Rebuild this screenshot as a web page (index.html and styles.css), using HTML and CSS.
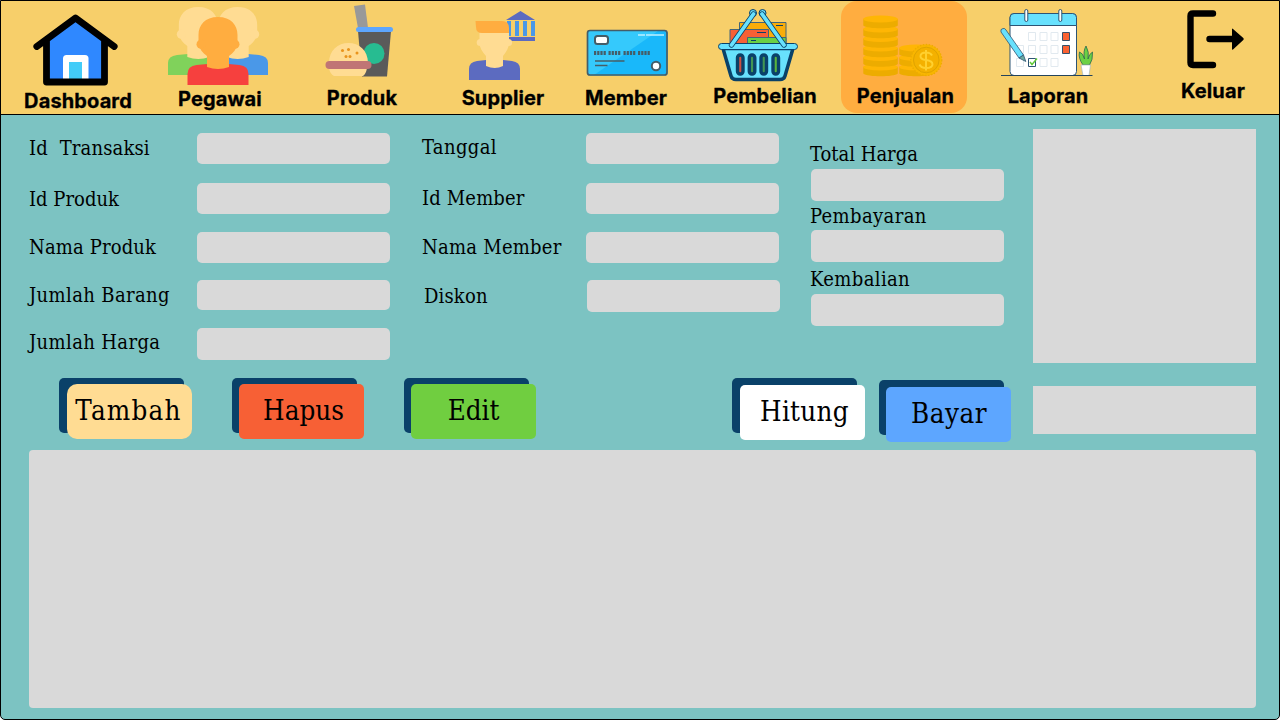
FILE: index.html
```html
<!DOCTYPE html>
<html lang="id">
<head>
<meta charset="utf-8">
<title>Penjualan</title>
<link rel="stylesheet" href="styles.css">
</head>
<body>
<div class="app">
<nav class="nav">
  <a class="nav-item dashboard"><svg width="120" height="88" viewBox="18 1 120 88">
    <path d="M46 40L75.500 20L105 40V82H46z" fill="#2f88ff"/>
    <path d="M63 80V58.500q0-3.500 3.500-3.500h18.500q3.500 0 3.500 3.500V80z" fill="#fff"/><path d="M69 62h13v18H69z" fill="#43ccf8"/>
    <path d="M46.500 40V82H104.500V40M36.800 46.500L75.500 18L114.200 46.500" fill="none" stroke="#000" stroke-width="6.800" stroke-linecap="round" stroke-linejoin="round"/>
  </svg><span>Dashboard</span></a>
  <a class="nav-item pegawai"><svg width="120" height="86" viewBox="160 1 120 86">
    <defs><g id="head"><path d="M218 17c-13 0-19.500 8-19.500 18v9c1 5 4 9 8.500 12v11q11 4 22 0V56c4.500-3 7.500-7 8.500-12v-9c0-10-6.500-18-19.500-18z"/><circle cx="201" cy="44.300" r="4.500"/><circle cx="235" cy="44.300" r="4.500"/></g></defs>
    <path d="M168 75V63q0-7 9-8l11-1h20v21z" fill="#80d25b"/><path d="M268 75V63q0-7-9-8l-11-1h-20v21z" fill="#4a98e8"/>
    <use href="#head" x="-19.700" y="-10" fill="#ffdc93"/><use href="#head" x="19.700" y="-10" fill="#ffdc93"/>
    <path d="M187.500 85V74q0-8 9-9l11-1h21l11 1q9 1 9 9v11z" fill="#f6403e"/>
    <use href="#head" fill="#ffad40"/>
  </svg><span>Pegawai</span></a>
  <a class="nav-item produk"><svg width="120" height="85" viewBox="302 1 120 85">
    <path d="M354 6l11-1.500L368 28h-10z" fill="#999"/><path d="M358 31h33l-4 45.500h-25z" fill="#5a5a5a"/><rect x="356" y="27" width="37" height="5" rx="2.500" fill="#5da6ff"/>
    <circle cx="374" cy="53.500" r="10.500" fill="#27bc91"/><path d="M329 63c0-13 9-20 19.500-20S368 50 368 63zM329 68h38q-1 6-4 8h-29q-4-2-5-8z" fill="#ffdc93"/>
    <rect x="325.500" y="61" width="46" height="8" rx="4" fill="#c07575"/><g fill="#e9941c"><circle cx="342.500" cy="50.500" r="1.500"/><circle cx="348.500" cy="49.500" r="1.500"/><circle cx="357" cy="53" r="1.500"/><circle cx="346" cy="56.500" r="1.500"/><circle cx="350" cy="56.500" r="1.500"/></g>
  </svg><span>Produk</span></a>
  <a class="nav-item supplier"><svg width="120" height="85" viewBox="443 1 120 85">
    <path d="M506 20l14.500-9L535 20zM508 37h27v4h-27z" fill="#5c6bc0"/><path d="M507 21h4v15h-4zM515 21h4v15h-4zM523 21h4v15h-4zM531 21h4v15h-4z" fill="#4a98e8"/>
    <path d="M469 80V69q0-7 8-8l9-1h17l9 1q8 1 8 8v11z" fill="#5c6bc0"/>
    <path d="M479.500 31h29.500v12c0 4-2.500 9-6 13v10q-8 4-17 0V56c-4-4-6.500-9-6.500-13z" fill="#ffdc93"/><circle cx="480.300" cy="42.500" r="3.600" fill="#ffdc93"/><circle cx="508.500" cy="42.500" r="3.600" fill="#ffdc93"/>
    <path d="M475.500 21H502q7 0 7 7v5H482q-6 0-6-6z" fill="#ffad40"/>
  </svg><span>Supplier</span></a>
  <a class="nav-item member"><svg width="120" height="85" viewBox="566 1 120 85">
    <rect x="587.500" y="30.500" width="80" height="45" rx="2" fill="#19b8fa"/><path d="M588 31h70L594 75h-6z" fill="#35c9fc"/>
    <rect x="587.500" y="30.500" width="79.500" height="44.500" rx="2.500" fill="none" stroke="#455d68" stroke-width="1.700"/>
    <rect x="595" y="36" width="13" height="8" rx="2.500" fill="#fff" stroke="#455d68" stroke-width="2"/><circle cx="656" cy="66" r="4.200" fill="#fff" stroke="#455d68" stroke-width="2"/>
    <path d="M594 53h12M608.500 53h12M623.500 53h12M638 53h12" stroke="#455d68" stroke-width="4" stroke-dasharray="2.200 1"/><path d="M595 61h29.500M595 65.500h12.500" stroke="#455d68" stroke-width="1.700"/><path d="M638 35h7M646 35h18" stroke="#bdf0ff" stroke-width="1.500"/>
  </svg><span>Member</span></a>
  <a class="nav-item pembelian"><svg width="120" height="83" viewBox="705 1 120 83">
    <g stroke="#426579" stroke-width="1"><path d="M739.500 22.500h46.500v22h-46.500z" fill="#f9ad0a"/><path d="M730 29.500h38.500V46H730z" fill="#f76035"/><path d="M747.500 37.500H786V46h-38.500z" fill="#6bd044"/></g><path d="M776 25.500h7M757 32.500h9M751 40.500h5" stroke="#0a4169"/>
    <path d="M723 48.500h70l-8 27.500q-1 3.500-5 3.500h-44q-4 0-5-3.500z" fill="#68e1fd" stroke="#0a4169" stroke-width="3.500"/>
    <rect x="718.500" y="43.500" width="79" height="6" rx="3" fill="#68e1fd" stroke="#0a4169"/>
    <g stroke="#0a4169" stroke-width="3.400"><rect x="737.500" y="55" width="5.500" height="19" rx="2.700" fill="#cd5042"/><rect x="749.300" y="55" width="5.500" height="19" rx="2.700" fill="#429653"/><rect x="761" y="55" width="5.500" height="19" rx="2.700" fill="#429653"/><rect x="773" y="55" width="5.500" height="19" rx="2.700" fill="#58b43d"/></g>
    <circle cx="753" cy="13" r="3.500" fill="#68e1fd" stroke="#0a4169"/><circle cx="762.500" cy="13" r="3.500" fill="#68e1fd" stroke="#0a4169"/>
    <g fill="none" stroke-linecap="round"><path d="M731.500 45L753.500 14M784 45L762 14" stroke="#0a4169" stroke-width="5.400"/><path d="M731.500 45L753.500 14M784 45L762 14" stroke="#68e1fd" stroke-width="3.800"/></g>
  </svg><span>Pembelian</span></a>
  <a class="nav-item penjualan active"><svg width="126" height="83" viewBox="841 1 126 83">
    <defs><g id="coin"><path d="M863.300 19v6.500c4 3.700 30.700 3.700 34.500 0V19z" fill="#edac00"/><ellipse cx="880.500" cy="19" rx="17.300" ry="3.600" fill="#ffb604"/></g></defs>
    <use href="#coin" x="36" y="48"/><use href="#coin" x="36" y="38.500"/><use href="#coin" x="36" y="29"/>
    <use href="#coin" y="48"/><use href="#coin" y="38.500"/><use href="#coin" y="29"/><use href="#coin" y="19.500"/><use href="#coin" y="10"/><use href="#coin"/>
    <circle cx="926.300" cy="60" r="15.500" fill="#f9b600"/><circle cx="926.300" cy="60" r="15.500" fill="none" stroke="#edac00" stroke-width="1.300" stroke-dasharray="1.500 1.500"/><circle cx="926.300" cy="60" r="12.800" fill="#f4b100" stroke="#dfa300"/>
    <path d="M932 55.500q-1.500-3-6-3-5.500 0-5.500 3.700 0 3 5.500 3.800 6.500 1 6.500 4.200 0 3.800-6.500 3.800-5 0-6.500-3.500M926 50v20.500" fill="none" stroke="#ffd02e" stroke-width="2"/>
  </svg><span>Penjualan</span></a>
  <a class="nav-item laporan"><svg width="120" height="83" viewBox="988 1 120 83">
    <rect x="1010" y="13.500" width="66.500" height="62" rx="4" fill="#fff" stroke="#2d5474"/><path d="M1010 25.500V17.500q0-4 4-4h58.500q4 0 4 4v8z" fill="#68e1fd" stroke="#2d5474"/>
    <g fill="#fff" stroke="#e1e9ef"><path d="M1028.500 32.500h7v8h-7zM1040 32.500h7v8h-7zM1051 32.500h7v8h-7zM1016.500 45.500h7v8h-7zM1028.500 45.500h7v8h-7zM1040 45.500h7v8h-7zM1051 45.500h7v8h-7zM1016.500 58.500h7v8h-7zM1040 58.500h7v8h-7zM1051 58.500h7v8h-7z"/></g>
    <g fill="#fb6232" stroke="#36516b"><path d="M1062.500 32.500h7v8h-7zM1062.500 45.500h7v8h-7z"/></g><path d="M1028.500 58.500h7v8h-7z" fill="#fff" stroke="#2d5474"/><path d="M1030 62l2 2.500 5-6" fill="none" stroke="#60c838" stroke-width="1.500"/>
    <g fill="#fff" stroke="#2d5474"><rect x="1024.800" y="9.500" width="3" height="12" rx="1.500"/><rect x="1058.800" y="9.500" width="3" height="12" rx="1.500"/></g>
    <path d="M1001 32q-1-3 2-3.500 2-.5 3 1.500l17.500 25-4.500 3z" fill="#68e1fd" stroke="#2d5474" stroke-width=".8"/><path d="M1019 58l4.500-3 2.300 6.500z" fill="#6caaa0" stroke="#2d5474" stroke-width=".8"/>
    <path d="M1083 65q-5-7-3.500-13 3.500 1 5 7-1.500-8 1.500-13 3.500 6 2 13 1-5 4.500-7 .5 8-3 13z" fill="#6bd044" stroke="#2d6650" stroke-width=".8"/><path d="M1081 65h9.500l-1.500 10.500h-6z" fill="#fff" stroke="#a8b9bd" stroke-width=".7"/><path d="M1001 75.500h91.500" stroke="#24445c"/>
  </svg><span>Laporan</span></a>
  <a class="nav-item keluar"><svg width="120" height="78" viewBox="1153 1 120 78">
    <path d="M1213 13.500h-20q-2.500 0-2.500 2.500v46.500q0 2.500 2.500 2.500h20M1209.500 39h24" fill="none" stroke="#000" stroke-width="6.400" stroke-linecap="round"/><path d="M1233 29l10.300 9q1 1 0 2l-10.300 9.500q-1 1-1-1V29.500q0-1.500 1-.5z"/>
  </svg><span>Keluar</span></a>
</nav>
<main class="main">
  <div class="top">
    <section class="form">
      <div class="fields first">
        <label class="loose-1">Id&nbsp; Transaksi</label><input>
        <label class="low">Id Produk</label><input>
        <label class="loose-1">Nama Produk</label><input>
        <label class="loose-3">Jumlah Barang</label><input class="short">
        <label class="high loose-3">Jumlah Harga</label><input class="tall">
      </div>
      <div class="fields second">
        <label class="high loose-3">Tanggal</label><input>
        <label class="loose-1">Id Member</label><input>
        <label class="loose-2">Nama Member</label><input>
        <label class="indent">Diskon</label><input class="tall shift">
      </div>
      <div class="totals">
        <label>Total Harga</label><input>
        <label class="loose-3">Pembayaran</label><input>
        <label class="lower loose-3">Kembalian</label><input>
      </div>
    </section>
    <aside class="receipt"></aside>
  </div>
  <div class="actions">
    <button class="btn add"><i class="plate"></i>Tambah</button>
    <button class="btn delete">Hapus</button>
    <button class="btn edit">Edit</button>
    <button class="btn count">Hitung</button>
    <button class="btn pay">Bayar</button>
    <div class="change"></div>
  </div>
  <div class="table"></div>
</main>
</div>
</body>
</html>
```
FILE: styles.css
```css
* { box-sizing: border-box; }
body { margin: 0; background: #fff; color: #000; }
.app {
  width: 1280px; height: 720px; overflow: hidden;
  border: 1px solid #000; border-radius: 0 0 5px 5px; background: #7cc3c2;
}
.nav {
  display: grid; height: 114px; padding-left: 17px;
  grid-template-columns: 142px 142px 141px 123px 139px 136px 147px 165px 120px;
  background: #f7cf6a; border-bottom: 1px solid #000;
  font: 700 20px/24px Inter, sans-serif;
}
.nav-item { width: 120px; height: 113px; text-align: center; white-space: nowrap; }
.nav-item svg { display: block; }
.nav-item span { display: block; -webkit-text-stroke: .3px #000; letter-spacing: .13px; }
.nav-item.active { width: 126px; height: 112px; border-radius: 16px; background: #ffad40; }
.penjualan span { padding-left: 3px; }

.main {
  height: 604px; padding: 14px 23px 0 28px;
  font-family: "DejaVu Serif Condensed", "DejaVu Serif", serif; font-stretch: condensed;
}
.top { display: flex; justify-content: space-between; height: 257px; }
.form { display: flex; padding-top: 4px; }
.fields { display: grid; align-content: start; align-items: start; }
.first { grid-template-columns: 168px 193px; grid-template-rows: 50px 49px 48px 48px 32px; }
.second { grid-template-columns: 164px 194px; grid-template-rows: 50px 49px 48px 32px; margin-left: 32px; }
label { font-size: 20px; line-height: 30px; white-space: nowrap; }
.loose-1 { letter-spacing: .15px; }
.loose-2 { letter-spacing: .25px; }
.loose-3 { letter-spacing: .38px; }
.low { padding-top: 1px; }
.high { margin-top: -1px; }
.indent { padding: 1px 0 0 2px; letter-spacing: .15px; }
input { display: block; width: 193px; height: 31px; padding: 0 8px; border: 0; border-radius: 5px; background: #d9d9d9; }
.short { height: 30px; }
.tall { height: 32px; }
.shift { margin-left: 1px; }
.totals {
  display: grid; margin-left: 30px; padding-top: 6px; align-content: start;
  grid-template-rows: 30px 32px 29px 32px 32px 32px;
}
.totals input { height: 32px; margin-left: 1px; }
.lower { padding-top: 2px; }
.receipt { width: 223px; height: 234px; background: #d9d9d9; }

.actions { display: flex; height: 64px; }
.btn {
  width: 125px; height: 55px; padding: 0 0 3px; border: 0; border-radius: 5px;
  font: inherit; font-size: 27.5px; color: #000; white-space: nowrap; box-shadow: -7px -6px #0a4169;
}
.add {
  position: relative; z-index: 0; margin: -2px 0 0 38px; padding: 0 2px 3px 0;
  background: none; box-shadow: none; letter-spacing: 1.2px;
}
.add::before { content: ""; position: absolute; z-index: -2; inset: -6px 8px 6px -8px; border-radius: 5px; background: #0a4169; }
.plate { position: absolute; z-index: -1; inset: 0; border-radius: 10px; background: #ffdc93; }
.delete { margin: -2px 0 0 47px; padding: 0 0 4px 4px; background: #f76035; }
.edit { margin: -2px 0 0 47px; padding-bottom: 4px; background: #70ce40; }
.count { margin: -1px 0 0 204px; padding-left: 4px; background: #fff; box-shadow: -8px -7px #0a4169; letter-spacing: .3px; }
.pay { margin: 1px 0 0 21px; padding-left: 1px; background: #5da6ff; box-shadow: -7px -7px #0a4169; letter-spacing: .5px; }
.change { width: 223px; height: 48px; margin-left: 22px; background: #d9d9d9; }
.table { height: 258px; border-radius: 4px; background: #d9d9d9; }
```
